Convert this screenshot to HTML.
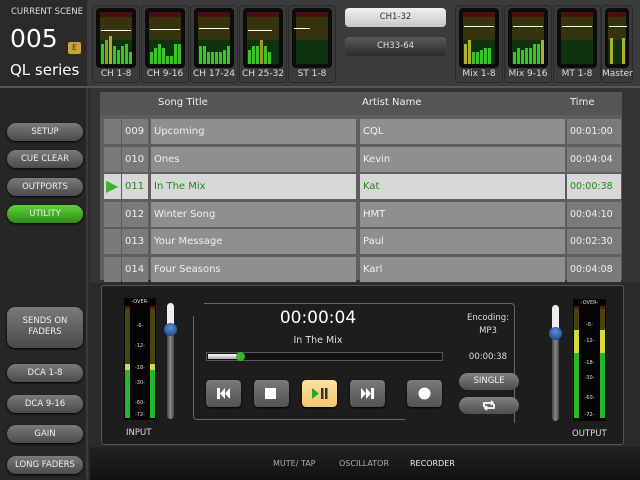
<!DOCTYPE html>
<html><head><meta charset="utf-8"><style>
*{margin:0;padding:0;box-sizing:border-box}
body{width:640px;height:480px;background:#2b2b2b;font-family:"DejaVu Sans","Liberation Sans",sans-serif;position:relative;overflow:hidden}
.a{position:absolute}
.mb{position:absolute;top:5px;width:48px;height:78px;background:#3a3a3a;border-radius:4px;border:1px solid #2a2a2a}
.mi{position:absolute;left:3px;top:2px;right:3px;height:60px;background:#0c0c0c;border-radius:4px;overflow:hidden}
.mz{position:absolute;left:4px;right:4px;top:4px;height:52px;background:linear-gradient(#4a1010 0,#4a1010 5px,#36340c 5px,#36340c 28px,#0e330e 28px)}
.bar{position:absolute;bottom:4px;width:3px;background:#3ec42a}
.pk{position:absolute;width:4px;height:1px;background:#fff}
.ml{position:absolute;bottom:3px;left:0;right:0;text-align:center;color:#ddd;font-size:9px}
.sb{position:absolute;left:7px;width:76px;height:18px;border-radius:9px;background:linear-gradient(#7a7a7a,#4a4a4a);color:#eee;font-size:8.5px;text-align:center;line-height:18px;box-shadow:0 1px 2px #000}
.row{position:absolute;left:104px;width:517px;height:25px}
.row div{position:absolute;top:0;height:25px;background:#8f8f8f;color:#f0f0f0;font-size:10px;line-height:25px;overflow:hidden;white-space:nowrap}
.row .t{left:463px;width:54px;background:#7a7a7a;padding-left:3px;font-size:9.5px}
.hl div,.hl .t{background:#d8d8d8;color:#1f8a1f}
.pb{position:absolute;top:380px;width:35px;height:27px;border-radius:4px;background:linear-gradient(#7a7a7a,#525252);box-shadow:0 1px 2px #000}
.sc{position:absolute;left:0;right:0;text-align:center;color:#ddd;font-size:5px}
</style></head><body>
<div class="a" style="left:0;top:0;width:640px;height:86px;background:#3c3c3c"></div>
<div class="a" style="left:0;top:0;width:87px;height:86px;background:#2a2a2a"></div>
<div class="a" style="left:11px;top:7px;color:#ddd;font-size:8.5px">CURRENT SCENE</div>
<div class="a" style="left:10px;top:24px;color:#fff;font-size:25px">005</div>
<div class="a" style="left:68px;top:42px;width:13px;height:12px;background:#c9a23a;border-radius:2px;color:#333;font-size:8px;text-align:center;line-height:12px">E</div>
<div class="a" style="left:10px;top:61px;color:#fff;font-size:15px">QL series</div>

<div class="mb" style="left:92px"><div class="mi"><div class="mz"></div>
<div class="bar" style="left:5px;height:20px"></div><div class="bar" style="left:9px;height:24px;background:#9a9a20"></div><div class="bar" style="left:13px;height:28px;background:#b0b030"></div><div class="bar" style="left:17px;height:18px"></div><div class="bar" style="left:21px;height:14px"></div><div class="bar" style="left:25px;height:18px"></div><div class="bar" style="left:29px;height:20px"></div><div class="bar" style="left:33px;height:12px"></div>
<div class="pk" style="left:5px;top:22px;width:30px"></div></div><div class="ml">CH 1-8</div></div>
<div class="mb" style="left:141px"><div class="mi"><div class="mz"></div>
<div class="bar" style="left:5px;height:12px"></div><div class="bar" style="left:9px;height:16px"></div><div class="bar" style="left:13px;height:20px"></div><div class="bar" style="left:17px;height:16px"></div><div class="bar" style="left:21px;height:8px"></div><div class="bar" style="left:25px;height:8px"></div><div class="bar" style="left:29px;height:20px"></div><div class="bar" style="left:33px;height:20px"></div>
<div class="pk" style="left:5px;top:21px;width:30px"></div></div><div class="ml">CH 9-16</div></div>
<div class="mb" style="left:190px"><div class="mi"><div class="mz"></div>
<div class="bar" style="left:5px;height:18px"></div><div class="bar" style="left:9px;height:18px"></div><div class="bar" style="left:13px;height:12px"></div><div class="bar" style="left:17px;height:12px"></div><div class="bar" style="left:21px;height:12px"></div><div class="bar" style="left:25px;height:12px"></div><div class="bar" style="left:29px;height:14px"></div><div class="bar" style="left:33px;height:18px"></div>
<div class="pk" style="left:5px;top:20px;width:30px"></div></div><div class="ml">CH 17-24</div></div>
<div class="mb" style="left:239px"><div class="mi"><div class="mz"></div>
<div class="bar" style="left:5px;height:14px"></div><div class="bar" style="left:9px;height:18px"></div><div class="bar" style="left:13px;height:18px"></div><div class="bar" style="left:17px;height:24px;background:#9a9a20"></div><div class="bar" style="left:21px;height:18px"></div><div class="bar" style="left:25px;height:12px"></div>
<div class="pk" style="left:5px;top:22px;width:24px"></div></div><div class="ml">CH 25-32</div></div>
<div class="mb" style="left:288px"><div class="mi"><div class="mz"></div><div class="pk" style="left:2px;top:20px;width:16px"></div></div><div class="ml">ST 1-8</div></div>

<div class="a" style="left:345px;top:8px;width:101px;height:19px;border-radius:4px;background:linear-gradient(#f0f0f0,#c8c8c8);color:#333;font-size:8.5px;text-align:center;line-height:19px">CH1-32</div>
<div class="a" style="left:345px;top:37px;width:101px;height:19px;border-radius:4px;background:linear-gradient(#5a5a5a,#2a2a2a);color:#ddd;font-size:8.5px;text-align:center;line-height:19px">CH33-64</div>

<div class="mb" style="left:455px"><div class="mi"><div class="mz"></div>
<div class="bar" style="left:5px;height:20px;background:#b0b030"></div><div class="bar" style="left:9px;height:24px;background:#b0b030"></div><div class="bar" style="left:13px;height:12px"></div><div class="bar" style="left:17px;height:12px"></div><div class="bar" style="left:21px;height:14px"></div><div class="bar" style="left:25px;height:16px"></div><div class="bar" style="left:29px;height:16px"></div>
<div class="pk" style="left:5px;top:18px;width:30px"></div></div><div class="ml">Mix 1-8</div></div>
<div class="mb" style="left:504px"><div class="mi"><div class="mz"></div>
<div class="bar" style="left:5px;height:12px"></div><div class="bar" style="left:9px;height:16px"></div><div class="bar" style="left:13px;height:14px"></div><div class="bar" style="left:17px;height:16px"></div><div class="bar" style="left:21px;height:16px"></div><div class="bar" style="left:25px;height:20px"></div><div class="bar" style="left:29px;height:20px"></div><div class="bar" style="left:33px;height:24px;background:#b0b030"></div>
<div class="pk" style="left:5px;top:18px;width:30px"></div></div><div class="ml">Mix 9-16</div></div>
<div class="mb" style="left:553px"><div class="mi"><div class="mz"></div><div class="pk" style="left:5px;top:18px;width:30px"></div></div><div class="ml">MT 1-8</div></div>
<div class="mb" style="left:601px;width:32px"><div class="mi"><div class="mz" style="left:3px;right:3px"></div>
<div class="bar" style="left:5px;height:26px;background:#b0b030"></div><div class="bar" style="left:17px;height:26px;background:#b0b030"></div>
<div class="pk" style="left:4px;top:18px;width:18px"></div></div><div class="ml">Master</div></div>

<div class="a" style="left:0;top:86px;width:640px;height:2px;background:#555"></div>
<div class="a" style="left:0;top:88px;width:88px;height:392px;background:#262626;border-right:2px solid #3a3a3a"></div>
<div class="sb" style="top:123px">SETUP</div>
<div class="sb" style="top:150px">CUE CLEAR</div>
<div class="sb" style="top:178px">OUTPORTS</div>
<div class="sb" style="top:205px;background:linear-gradient(#5ed33a,#2c8a14)">UTILITY</div>
<div class="sb" style="top:307px;height:41px;line-height:11px;padding-top:9px;border-radius:8px">SENDS ON<br>FADERS</div>
<div class="sb" style="top:364px">DCA 1-8</div>
<div class="sb" style="top:395px">DCA 9-16</div>
<div class="sb" style="top:425px">GAIN</div>
<div class="sb" style="top:456px">LONG FADERS</div>

<div class="a" style="left:90px;top:88px;width:550px;height:195px;background:#333"></div>
<div class="a" style="left:100px;top:92px;width:522px;height:188px;background:#5e5e5e"></div>
<div class="a" style="left:100px;top:92px;width:522px;height:23px;background:#555"></div>
<div class="a" style="left:158px;top:97px;color:#eee;font-size:10px">Song Title</div>
<div class="a" style="left:362px;top:97px;color:#eee;font-size:10px">Artist Name</div>
<div class="a" style="left:570px;top:97px;color:#eee;font-size:10px">Time</div>
<div class="row" style="top:119px"><div style="left:0;width:17px;background:#7a7a7a"></div><div style="left:18px;width:26px;background:#7a7a7a;padding-left:3px">009</div><div style="left:47px;width:205px;padding-left:3px">Upcoming</div><div style="left:256px;width:205px;padding-left:3px">CQL</div><div class="t">00:01:00</div></div>
<div class="row" style="top:147px"><div style="left:0;width:17px;background:#7a7a7a"></div><div style="left:18px;width:26px;background:#7a7a7a;padding-left:3px">010</div><div style="left:47px;width:205px;padding-left:3px">Ones</div><div style="left:256px;width:205px;padding-left:3px">Kevin</div><div class="t">00:04:04</div></div>
<div class="row hl" style="top:174px"><div style="left:0;width:17px;color:#3ab52a;font-size:16px;line-height:24px;padding-left:2px">&#9654;</div><div style="left:18px;width:26px;padding-left:3px">011</div><div style="left:47px;width:205px;padding-left:3px">In The Mix</div><div style="left:256px;width:205px;padding-left:3px">Kat</div><div class="t">00:00:38</div></div>
<div class="row" style="top:202px"><div style="left:0;width:17px;background:#7a7a7a"></div><div style="left:18px;width:26px;background:#7a7a7a;padding-left:3px">012</div><div style="left:47px;width:205px;padding-left:3px">Winter Song</div><div style="left:256px;width:205px;padding-left:3px">HMT</div><div class="t">00:04:10</div></div>
<div class="row" style="top:229px"><div style="left:0;width:17px;background:#7a7a7a"></div><div style="left:18px;width:26px;background:#7a7a7a;padding-left:3px">013</div><div style="left:47px;width:205px;padding-left:3px">Your Message</div><div style="left:256px;width:205px;padding-left:3px">Paul</div><div class="t">00:02:30</div></div>
<div class="row" style="top:257px;height:23px"><div style="left:0;width:17px;background:#7a7a7a"></div><div style="left:18px;width:26px;background:#7a7a7a;padding-left:3px">014</div><div style="left:47px;width:205px;padding-left:3px">Four Seasons</div><div style="left:256px;width:205px;padding-left:3px">Karl</div><div class="t">00:04:08</div></div>

<div class="a" style="left:90px;top:283px;width:550px;height:164px;background:#2a2a2a"></div>
<div class="a" style="left:101px;top:285px;width:523px;height:160px;background:#1d1d1d;border:1px solid #555;border-radius:3px"></div>
<div class="a" style="left:124px;top:298px;width:32px;height:122px;background:#050505">
<div class="a" style="left:1px;top:8px;width:5px;height:112px;background:linear-gradient(#5a1515 0,#5a1515 3px,#4a4410 3px,#4a4410 58px,#d8d840 58px,#d8d840 64px,#27b827 64px)"></div>
<div class="a" style="left:26px;top:8px;width:5px;height:112px;background:linear-gradient(#5a1515 0,#5a1515 3px,#4a4410 3px,#4a4410 58px,#d8d840 58px,#d8d840 64px,#27b827 64px)"></div>
<div class="sc" style="top:1px">-OVER-</div><div class="sc" style="top:25px">-6-</div><div class="sc" style="top:45px">-12-</div><div class="sc" style="top:67px">-18-</div><div class="sc" style="top:82px">-30-</div><div class="sc" style="top:102px;">-60-</div><div class="sc" style="top:114px">-72-</div></div>
<div class="a" style="left:126px;top:428px;color:#ddd;font-size:8.5px">INPUT</div>
<div class="a" style="left:167px;top:303px;width:7px;height:116px;border-radius:4px;background:linear-gradient(90deg,#444,#888,#444)"></div>
<div class="a" style="left:167px;top:303px;width:7px;height:26px;border-radius:4px;background:#eee"></div>
<div class="a" style="left:164px;top:323px;width:13px;height:13px;border-radius:50%;background:radial-gradient(circle at 50% 35%,#5a8ed8,#123a78)"></div>

<div class="a" style="left:204px;top:303px;width:311px;height:120px;border-top:1px solid #666;border-right:1px solid #666;border-radius:0 4px 0 0"></div>
<div class="a" style="left:193px;top:316px;width:212px;height:104px;border-left:1px solid #666;border-bottom:1px solid #666;border-radius:0 0 0 4px"></div>

<div class="a" style="left:240px;top:308px;width:156px;text-align:center;color:#fff;font-size:17px">00:00:04</div>
<div class="a" style="left:240px;top:335px;width:156px;text-align:center;color:#ddd;font-size:9.5px">In The Mix</div>
<div class="a" style="left:206px;top:352px;width:237px;height:9px;background:#111;border:1px solid #555"></div>
<div class="a" style="left:208px;top:354px;width:33px;height:5px;background:linear-gradient(#fff,#aaa)"></div>
<div class="a" style="left:236px;top:352px;width:9px;height:9px;border-radius:50%;background:#3ab82a"></div>
<div class="a" style="left:462px;top:312px;width:52px;text-align:center;color:#ddd;font-size:8.5px;line-height:13px">Encoding:<br>MP3</div>
<div class="a" style="left:462px;top:352px;width:52px;text-align:center;color:#ddd;font-size:8.5px">00:00:38</div>

<div class="pb" style="left:206px"><svg width="35" height="27"><path d="M11 8v11h3V8zM14 13.5 19 8v11zM19 13.5 24 8v11z" fill="#fff"/></svg></div>
<div class="pb" style="left:254px"><svg width="35" height="27"><rect x="11" y="8" width="11" height="11" fill="#fff"/></svg></div>
<div class="pb" style="left:302px;background:linear-gradient(#fde2a0,#f2c770)"><svg width="35" height="27"><path d="M10 8l7 5.5-7 5.5z" fill="#2aa52a"/><rect x="19" y="8" width="2.5" height="11" fill="#333"/><rect x="23" y="8" width="2.5" height="11" fill="#333"/></svg></div>
<div class="pb" style="left:350px"><svg width="35" height="27"><path d="M11 8l5 5.5-5 5.5zM16 8l5 5.5-5 5.5zM21 8h3v11h-3z" fill="#fff"/></svg></div>
<div class="pb" style="left:407px"><svg width="35" height="27"><circle cx="17.5" cy="13.5" r="6" fill="#fff"/></svg></div>
<div class="a" style="left:459px;top:373px;width:60px;height:17px;border-radius:9px;background:linear-gradient(#808080,#4e4e4e);color:#eee;font-size:8.5px;text-align:center;line-height:17px">SINGLE</div>
<div class="a" style="left:459px;top:397px;width:60px;height:17px;border-radius:9px;background:linear-gradient(#808080,#4e4e4e)"><svg width="60" height="17"><path d="M25 10V6h9M32 4l2 2-2 2M35 7v4h-9M28 13l-2-2 2-2" stroke="#fff" stroke-width="1.8" fill="none"/></svg></div>

<div class="a" style="left:552px;top:305px;width:7px;height:116px;border-radius:4px;background:linear-gradient(90deg,#444,#888,#444)"></div>
<div class="a" style="left:552px;top:305px;width:7px;height:28px;border-radius:4px;background:#eee"></div>
<div class="a" style="left:549px;top:327px;width:13px;height:13px;border-radius:50%;background:radial-gradient(circle at 50% 35%,#5a8ed8,#123a78)"></div>
<div class="a" style="left:573px;top:299px;width:33px;height:122px;background:#050505">
<div class="a" style="left:1px;top:7px;width:5px;height:112px;background:linear-gradient(#5a1515 0,#5a1515 3px,#4a4410 3px,#4a4410 24px,#d8d840 24px,#d8d840 47px,#27b827 47px)"></div>
<div class="a" style="left:27px;top:7px;width:5px;height:112px;background:linear-gradient(#5a1515 0,#5a1515 3px,#4a4410 3px,#4a4410 24px,#d8d840 24px,#d8d840 47px,#27b827 47px)"></div>
<div class="sc" style="top:1px">-OVER-</div><div class="sc" style="top:23px">-6-</div><div class="sc" style="top:39px">-12-</div><div class="sc" style="top:61px">-18-</div><div class="sc" style="top:76px">-30-</div><div class="sc" style="top:96px">-60-</div><div class="sc" style="top:113px">-72-</div></div>
<div class="a" style="left:572px;top:429px;color:#ddd;font-size:8.5px">OUTPUT</div>

<div class="a" style="left:90px;top:447px;width:550px;height:33px;background:linear-gradient(#222,#111)"></div>
<div class="a" style="left:273px;top:459px;color:#aaa;font-size:8px">MUTE/ TAP</div>
<div class="a" style="left:339px;top:459px;color:#aaa;font-size:8px">OSCILLATOR</div>
<div class="a" style="left:410px;top:459px;color:#eee;font-size:8px">RECORDER</div>
</body></html>
